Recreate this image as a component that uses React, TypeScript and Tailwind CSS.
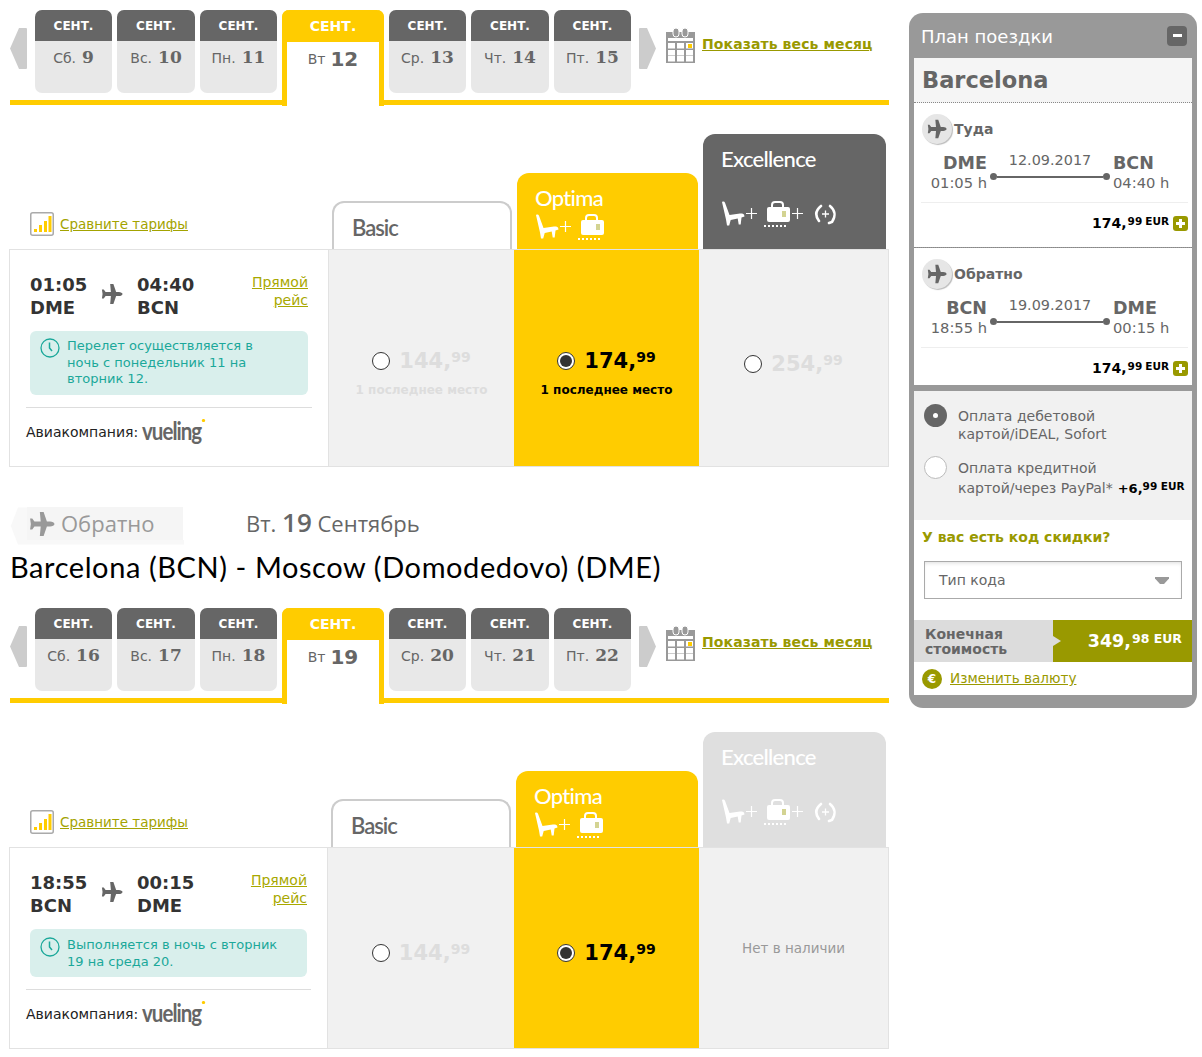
import React from "react";

const SERIF = "[font-family:'DejaVu_Serif',serif]";
const HUM = "[font-family:'Lato',sans-serif]";

function PlaneIcon({ className }: { className?: string }) {
  return (
    <svg viewBox="0 0 24 24" className={className} fill="currentColor">
      <path d="M23.500 12c0-1.200-2-2.300-4-2.300h-3L13.500 1H10l.8 8.700H5L3 7H1l.7 5-.7 5h2l2-2.700h5.800L10 23h3.500l3-8.700h3c2 0 4-1.100 4-2.300z" />
    </svg>
  );
}

function Arrow({ dir }: { dir: "l" | "r" }) {
  return (
    <svg viewBox="0 0 17 41" className="mt-[18px] h-[41px] w-[17px] shrink-0" fill="#cccccc">
      {dir === "l" ? <path d="M17 1v39a1 1 0 0 1-1 1H9L0 20.500 9 0h7a1 1 0 0 1 1 1z" /> : <path d="M0 1v39a1 1 0 0 0 1 1h7l9-20.500L8 0H1a1 1 0 0 0-1 1z" />}
    </svg>
  );
}

function CalendarIcon() {
  return (
    <svg viewBox="0 0 29 35" className="ml-[10px] mt-[18px] h-[35px] w-[29px] shrink-0">
      <path d="M0 4h29v31H0z" fill="#999" />
      <rect x="7" y="0" width="6" height="9" rx="3" fill="#999" stroke="#fff" strokeWidth="1" />
      <rect x="16" y="0" width="6" height="9" rx="3" fill="#999" stroke="#fff" strokeWidth="1" />
      <path d="M2 10h25v3H2z" fill="#fff" />
      {[15, 22, 28].map((y) =>
        [2, 11, 20].map((x) => <rect key={`${y}-${x}`} x={x} y={y} width="7" height="5.500" fill="#fff" />)
      )}
      <rect x="22" y="16" width="4" height="4" fill="#ffcc00" />
    </svg>
  );
}

function DayTab({ wd, n, w }: { wd: string; n: string; w: string }) {
  return (
    <div className={`${w} h-[83px] shrink-0 overflow-hidden rounded-[7px] bg-[#e8e8e8]`}>
      <div className="flex h-[31px] items-center justify-center bg-[#666666] pt-[1px] text-[12px] font-bold text-white">СЕНТ.</div>
      <div className="mt-[1px] flex items-center justify-center gap-[6px] text-[14px] text-[#666666]">
        <span className="pt-[2px]">{wd}</span>
        <span className={`${SERIF} text-[17px] font-bold leading-[30px]`}>{n}</span>
      </div>
    </div>
  );
}

function DateStrip({ days, active }: { days: [string, string][]; active: string }) {
  const widths = ["w-[77px]", "w-[78px]", "w-[77px]"];
  return (
    <div className="flex h-[105px] items-start border-b-[5px] border-[#ffcc00] pt-[10px]">
      <Arrow dir="l" />
      <div className="ml-[8px] flex items-start gap-[5px]">
        {days.slice(0, 3).map((d, i) => (
          <DayTab key={d[1]} wd={d[0]} n={d[1]} w={widths[i]} />
        ))}
        <div className="relative h-[96px] w-[102px] shrink-0 rounded-t-[7px] border-x-[5px] border-[#ffcc00] bg-white">
          <div className="-mx-[5px] flex h-[32px] items-center justify-center rounded-t-[7px] bg-[#ffcc00] text-[14px] font-bold text-white">СЕНТ.</div>
          <div className="mt-[2px] flex items-center justify-center gap-[5px] text-[14px] text-[#666666]">
            <span className="pt-[1px]">Вт</span>
            <span className="text-[20px] font-bold leading-[30px]">{active}</span>
          </div>
        </div>
        {days.slice(3).map((d, i) => (
          <DayTab key={d[1]} wd={d[0]} n={d[1]} w={widths[i]} />
        ))}
      </div>
      <div className="ml-[8px]"><Arrow dir="r" /></div>
      <CalendarIcon />
      <a className="ml-[7px] mt-[24px] whitespace-nowrap text-[14px] font-bold leading-[20px] tracking-[0.1px] text-[#999900] underline">Показать весь месяц</a>
    </div>
  );
}

function Seat() {
  return (
    <svg viewBox="0 0 24 26" className="h-[26px] w-[24px] shrink-0" fill="currentColor">
      <path d="M1 1c1.500-.8 2.500-.4 3 .8L8.500 14 19 12.500c2-.2 3.500.3 4 1l.5 2-3 1-.8 7h-2l-1-6-7 1.500-1.500 5.500H6L5 18.500z" />
    </svg>
  );
}
function Bag() {
  return (
    <svg viewBox="0 0 28 27" className="h-[27px] w-[28px] shrink-0">
      <path d="M9 8V5a3 3 0 0 1 3-3h5a3 3 0 0 1 3 3v3" fill="none" stroke="currentColor" strokeWidth="2" />
      <rect x="4" y="7" width="23" height="15" rx="2" fill="currentColor" />
      <rect x="19" y="11" width="4" height="6" fill="#b5b54a" fillOpacity="0.6" />
      <path d="M1 26h2m2 0h2m2 0h2m2 0h2m2 0h2m2 0h2" stroke="currentColor" strokeWidth="2" />
    </svg>
  );
}
function Plus() {
  return (
    <svg viewBox="0 0 11 11" className="h-[11px] w-[11px] shrink-0" stroke="currentColor" strokeWidth="1.200">
      <path d="M5.500 0v11M0 5.500h11" />
    </svg>
  );
}
function Change() {
  return (
    <svg viewBox="0 0 25 24" className="h-[24px] w-[25px] shrink-0" fill="none" stroke="currentColor" strokeWidth="2.600" strokeLinecap="round">
      <path d="M8 4C3 8 1.500 13 6 19" />
      <path d="M17 4c5 4 6 10 2 16l-3 1" />
      <path d="M12.500 8.500v7M9 12h7" strokeWidth="1.300" strokeLinecap="butt" />
    </svg>
  );
}

function FareTabs({ shift, optW, exDisabled }: { shift: string; optW: string; exDisabled?: boolean }) {
  return (
    <div className="flex h-[144px] items-end">
      <div className={`${shift} flex h-[50px] items-center pl-[20px]`}>
        <svg viewBox="0 0 24 24" className="h-[24px] w-[24px] shrink-0">
          <rect x="0.750" y="0.750" width="22.500" height="22.500" rx="2" fill="#fff" stroke="#aaa" strokeWidth="1.500" />
          <path d="M4 17h3v3H4zM9 13h3v7H9zM14 9h3v11h-3zM18.500 4h3v16h-3z" fill="#ffcc00" />
        </svg>
        <a className="ml-[6px] text-[13.500px] text-[#a3a300] underline">Сравните тарифы</a>
      </div>
      <div className="flex h-[48px] w-[180px] items-center rounded-t-[12px] border-x-2 border-t-2 border-[#cccccc] bg-white pl-[18px] pt-[4px]">
        <span className={`${HUM} text-[22px] font-semibold leading-none tracking-[-1px] text-[#666666]`}>Basic</span>
      </div>
      <div className={`ml-[5px] h-[76px] ${optW} rounded-t-[12px] bg-[#ffcc00] pl-[18px] pt-[10px] text-white`}>
        <div className={`${HUM} text-[22px] font-medium leading-[30px] tracking-[-0.7px]`}>Optima</div>
        <div className="flex items-center gap-[1px]">
          <Seat />
          <Plus />
          <span className="ml-[5px]"><Bag /></span>
        </div>
      </div>
      <div className={`ml-[5px] h-[115px] w-[183px] rounded-t-[12px] pl-[18px] pt-[10px] text-white ${exDisabled ? "bg-[#dfdfdf]" : "bg-[#666666]"}`}>
        <div className={`${HUM} text-[22px] font-medium leading-[30px] tracking-[-0.7px]`}>Excellence</div>
        <div className="mt-[26px] flex items-center gap-[1px]">
          <Seat />
          <Plus />
          <span className="ml-[5px]"><Bag /></span>
          <Plus />
          <span className="ml-[9px]"><Change /></span>
        </div>
      </div>
    </div>
  );
}

function ClockIcon() {
  return (
    <svg viewBox="0 0 20 20" className="h-[20px] w-[20px] shrink-0" fill="none" stroke="#1ba89a">
      <circle cx="10" cy="10" r="9" strokeWidth="1.300" />
      <path d="M9.500 4.500V10l2.500 3" strokeWidth="1.500" />
    </svg>
  );
}

function Price({ int, dim, sel }: { int: string; dim?: boolean; sel?: boolean }) {
  return (
    <div className="flex items-center justify-center gap-[9px]">
      <span className="relative mt-[4px] h-[18px] w-[18px] shrink-0 rounded-full border border-[#333333] bg-white">
        {sel && <span className="absolute left-[2px] top-[2px] h-[12px] w-[12px] rounded-full bg-[#333333]" />}
      </span>
      <span className={`whitespace-nowrap text-[21px] font-bold leading-[26px] ${dim ? "text-[#dddddd]" : "text-black"}`}>
        {int},<span className="align-[6px] text-[14px]">99</span>
      </span>
    </div>
  );
}

function Flight({ t1, a1, t2, a2, note, wClass, alertH }: { t1: string; a1: string; t2: string; a2: string; note: React.ReactNode; wClass: string; alertH: string }) {
  return (
    <div className={`${wClass} shrink-0 bg-white pl-[16px] pr-[16px] pt-[23px]`}>
      <div className="flex pl-[4px] pr-[4px]">
        <div className="w-[71px] text-[18px] font-bold leading-[23px] text-[#333333]">
          <div>{t1}</div>
          <div>{a1}</div>
        </div>
        <PlaneIcon className="mt-[10px] h-[22px] w-[22px] text-[#666666]" />
        <div className="ml-[14px] w-[90px] text-[18px] font-bold leading-[23px] text-[#333333]">
          <div>{t2}</div>
          <div>{a2}</div>
        </div>
        <a className="ml-auto text-right text-[14px] leading-[18px] text-[#a8a800] underline">
          Прямой
          <br />
          рейс
        </a>
      </div>
      <div className={`mx-[4px] mt-[12px] flex ${alertH} rounded-[6px] bg-[#d9efec] pl-[10px] pr-[4px] text-[13px] leading-[16.500px] text-[#1ba89a]`}>
        <ClockIcon />
        <div className="ml-[7px]">{note}</div>
      </div>
      <div className="mt-[12px] border-t border-[#dddddd] pt-[10px]">
        <div className="flex items-center text-[14px] text-[#222222]">
          <span>Авиакомпания:</span>
          <span className={`${HUM} relative ml-[4px] origin-left -translate-y-[2px] scale-x-[0.82] text-[25px] font-bold leading-[28px] tracking-[-1.200px] text-[#666666]`}>
            vueling
            <span className="absolute -right-[5px] top-[3px] h-[3px] w-[4px] rounded-full bg-[#ffcc00]" />
          </span>
        </div>
      </div>
    </div>
  );
}

function Segment({ label, a, b, t1, t2, date }: { label: string; a: string; b: string; t1: string; t2: string; date: string }) {
  return (
    <div className="h-[144px] bg-white pl-[7px] pr-[4px] pt-[11px]">
      <div className="flex items-center pl-[1px]">
        <span className="flex h-[30px] w-[30px] items-center justify-center rounded-full bg-[#e6e6e6] shadow-[1px_1px_1px_#bbb]">
          <PlaneIcon className="h-[20px] w-[20px] text-[#666666]" />
        </span>
        <span className="ml-[2px] text-[14px] font-bold text-[#666666]">{label}</span>
      </div>
      <div className="mt-[8px] flex text-[#666666]">
        <div className="w-[66px] shrink-0 text-right">
          <div className="text-[17.500px] font-bold leading-[22px]">{a}</div>
          <div className="text-[14.700px] leading-[18px]">{t1}</div>
        </div>
        <div className="w-[126px] shrink-0 px-[1px] text-center">
          <div className="text-[14.400px] leading-[16px]">{date}</div>
          <div className="mt-[5px] flex items-center px-[2px]">
            <span className="h-[7px] w-[7px] shrink-0 rounded-full bg-[#666666]" />
            <span className="h-[2px] grow bg-[#666666]" />
            <span className="h-[7px] w-[7px] shrink-0 rounded-full bg-[#666666]" />
          </div>
        </div>
        <div className="shrink-0">
          <div className="text-[17.500px] font-bold leading-[22px]">{b}</div>
          <div className="text-[14.700px] leading-[18px]">{t2}</div>
        </div>
      </div>
      <div className="mt-[10px] border-t border-[#eeeeee]" />
      <div className="mt-[12px] flex items-center justify-end text-black">
        <span className="text-[14px] font-bold leading-[16px]">174,</span>
        <span className="-mt-[3px] ml-[1px] text-[10.500px] font-bold">99</span>
        <span className="-mt-[3px] ml-[3px] text-[10.500px] font-bold">EUR</span>
        <span className="ml-[4px] flex h-[15px] w-[15px] items-center justify-center rounded-[3px] bg-[#999900] text-white">
          <svg viewBox="0 0 9 9" className="h-[9px] w-[9px]" fill="#fff"><path d="M3 0h3v3h3v3H6v3H3V6H0V3h3z" /></svg>
        </span>
      </div>
    </div>
  );
}

function Sidebar() {
  return (
    <aside className="ml-[20px] mt-[13px] h-[695px] w-[288px] shrink-0 rounded-[14px] bg-[#999999] px-[5px]">
      <div className="flex h-[45px] items-center justify-between pl-[7px] pr-[5px]">
        <span className="pt-[2px] text-[18px] text-white">План поездки</span>
        <span className="flex h-[20px] w-[20px] items-center justify-center rounded-[4px] bg-[#666666]">
          <span className="h-[3px] w-[9px] bg-white" />
        </span>
      </div>
      <div className="flex h-[45px] items-center border-b border-dotted border-[#888888] bg-[#f5f5f5] pl-[8px] pt-[1px] text-[22.500px] font-bold text-[#666666]">Barcelona</div>
      <Segment label="Туда" a="DME" b="BCN" t1="01:05 h" t2="04:40 h" date="12.09.2017" />
      <div className="border-t border-dotted border-[#888888]" />
      <div className="h-[137px] overflow-hidden bg-white">
        <Segment label="Обратно" a="BCN" b="DME" t1="18:55 h" t2="00:15 h" date="19.09.2017" />
      </div>
      <div className="mt-[6px] h-[129px] bg-[#f1f1f1] pl-[10px] pt-[13px] text-[14px] leading-[17.500px] text-[#666666]">
        <div className="flex">
          <span className="flex h-[23px] w-[23px] shrink-0 items-center justify-center rounded-full bg-[#666666]">
            <span className="h-[5px] w-[5px] rounded-full bg-white" />
          </span>
          <div className="ml-[11px] pt-[4px]">
            Оплата дебетовой
            <br />
            картой/iDEAL, Sofort
          </div>
        </div>
        <div className="mt-[13px] flex">
          <span className="h-[23px] w-[23px] shrink-0 rounded-full border border-[#bbbbbb] bg-white" />
          <div className="ml-[11px] whitespace-nowrap pt-[4px]">
            Оплата кредитной
            <br />
            картой/через PayPal*
            <span className="ml-[5px] text-[13px] font-bold text-black">
              +6,<span className="align-[3px] text-[10.500px]">99 EUR</span>
            </span>
          </div>
        </div>
      </div>
      <div className="h-[100px] bg-white pl-[8px] pt-[8px]">
        <div className="text-[14px] font-bold leading-[18px] text-[#999900]">У вас есть код скидки?</div>
        <div className="ml-[2px] mt-[15px] flex h-[38px] w-[258px] items-center justify-between border border-[#aaaaaa] bg-white pl-[14px] pr-[12px] pt-[1px] text-[14px] text-[#666666] shadow-[inset_0_3px_4px_-2px_#dddddd]">
          <span>Тип кода</span>
          <svg viewBox="0 0 14 7" className="h-[7px] w-[14px]" fill="#999"><path d="M0 0h14v1.500L9 7H5L0 1.500z" /></svg>
        </div>
      </div>
      <div className="flex h-[42px]">
        <div className="w-[139px] bg-[#dcdcdc] pl-[11px] pt-[7px] text-[14px] font-bold leading-[15px] text-[#666666]">
          Конечная
          <br />
          стоимость
        </div>
        <div className="relative flex w-[139px] items-center justify-end bg-[#999900] pr-[10px] font-bold text-white">
          <span className="absolute left-0 top-[16px] h-0 w-0 border-y-[5px] border-l-[8px] border-y-transparent border-l-[#dcdcdc]" />
          <span className="text-[17.500px]">349,</span>
          <span className="-mt-[3px] ml-[1px] text-[12.500px]">98 EUR</span>
        </div>
      </div>
      <div className="flex h-[33px] items-center bg-white pl-[8px]">
        <span className="flex h-[20px] w-[20px] items-center justify-center rounded-full bg-[#999900] text-[12px] font-bold leading-none text-white">€</span>
        <a className="ml-[8px] text-[13.600px] text-[#999900] underline">Изменить валюту</a>
      </div>
    </aside>
  );
}

export default function App() {
  const w1: [string, string][] = [["Сб.", "9"], ["Вс.", "10"], ["Пн.", "11"], ["Ср.", "13"], ["Чт.", "14"], ["Пт.", "15"]];
  const w2: [string, string][] = [["Сб.", "16"], ["Вс.", "17"], ["Пн.", "18"], ["Ср.", "20"], ["Чт.", "21"], ["Пт.", "22"]];
  return (
    <div className="flex w-[1202px] bg-white pl-[10px] [font-family:'DejaVu_Sans',Verdana,sans-serif]">
      <main className="w-[879px] shrink-0">
        <DateStrip days={w1} active="12" />
        <FareTabs shift="w-[322px]" optW="w-[181px]" />
        <div className="-ml-px flex h-[218px] border-x border-y border-[#e2e2e2]">
          <Flight
            t1="01:05" a1="DME" t2="04:40" a2="BCN" wClass="w-[318px]" alertH="h-[64px] pt-[7px]"
            note={<>Перелет осуществляется в<br />ночь с понедельник 11 на<br />вторник 12.</>}
          />
          <div className="flex w-[186px] flex-col items-center justify-center border-l border-[#e2e2e2] bg-[#f1f1f1] pt-[27px]">
            <Price int="144" dim />
            <div className="mt-[7px] whitespace-nowrap text-[12px] font-bold text-[#dddddd]">1 последнее место</div>
          </div>
          <div className="flex w-[185px] flex-col items-center justify-center bg-[#ffcc00] pt-[27px]">
            <Price int="174" sel />
            <div className="mt-[7px] whitespace-nowrap text-[12px] font-bold text-black">1 последнее место</div>
          </div>
          <div className="flex w-[189px] items-center justify-center bg-[#f1f1f1] pt-[8px]">
            <Price int="254" dim />
          </div>
        </div>

        <div className="h-[131px] pt-[40px]">
          <div className="flex items-center">
            <div className="relative flex h-[33px] w-[173px] items-center pl-[19px] text-[#999999]">
              <svg viewBox="0 0 174 38" className="absolute left-0 top-0 h-[38px] w-[174px]">
                <path d="M8 .5.800 19 8 37.500h166V33H17V.5z" fill="#f8f8f8" />
                <path d="M17 0h156v33H17z" fill="#f5f5f5" />
              </svg>
              <PlaneIcon className="relative h-[26px] w-[26px]" />
              <span className="relative ml-[6px] text-[22px] [font-family:'Open_Sans',sans-serif]">Обратно</span>
            </div>
            <div className="ml-[63px] text-[22px] text-[#666666] [font-family:'Open_Sans',sans-serif]">
              Вт. <span className="text-[26px] font-semibold leading-none">19</span> Сентябрь
            </div>
          </div>
          <div className={`${HUM} mt-[7px] whitespace-nowrap text-[29px] leading-[40px] tracking-[0.58px] text-black`}>Barcelona (BCN) - Moscow (Domodedovo) (DME)</div>
        </div>

        <DateStrip days={w2} active="19" />
        <FareTabs shift="w-[321px]" optW="w-[182px]" exDisabled />
        <div className="-ml-px flex h-[202px] border-x border-y border-[#e2e2e2]">
          <Flight
            t1="18:55" a1="BCN" t2="00:15" a2="DME" wClass="w-[317px]" alertH="h-[48px] pt-[8px]"
            note={<>Выполняется в ночь с вторник<br />19 на среда 20.</>}
          />
          <div className="flex w-[187px] items-center justify-center border-l border-[#e2e2e2] bg-[#f1f1f1] pt-[6px]">
            <Price int="144" dim />
          </div>
          <div className="flex w-[185px] items-center justify-center bg-[#ffcc00] pt-[6px]">
            <Price int="174" sel />
          </div>
          <div className="flex w-[189px] items-center justify-center bg-[#f1f1f1] text-[13.500px] text-[#999999]">Нет в наличии</div>
        </div>
      </main>
      <Sidebar />
    </div>
  );
}
